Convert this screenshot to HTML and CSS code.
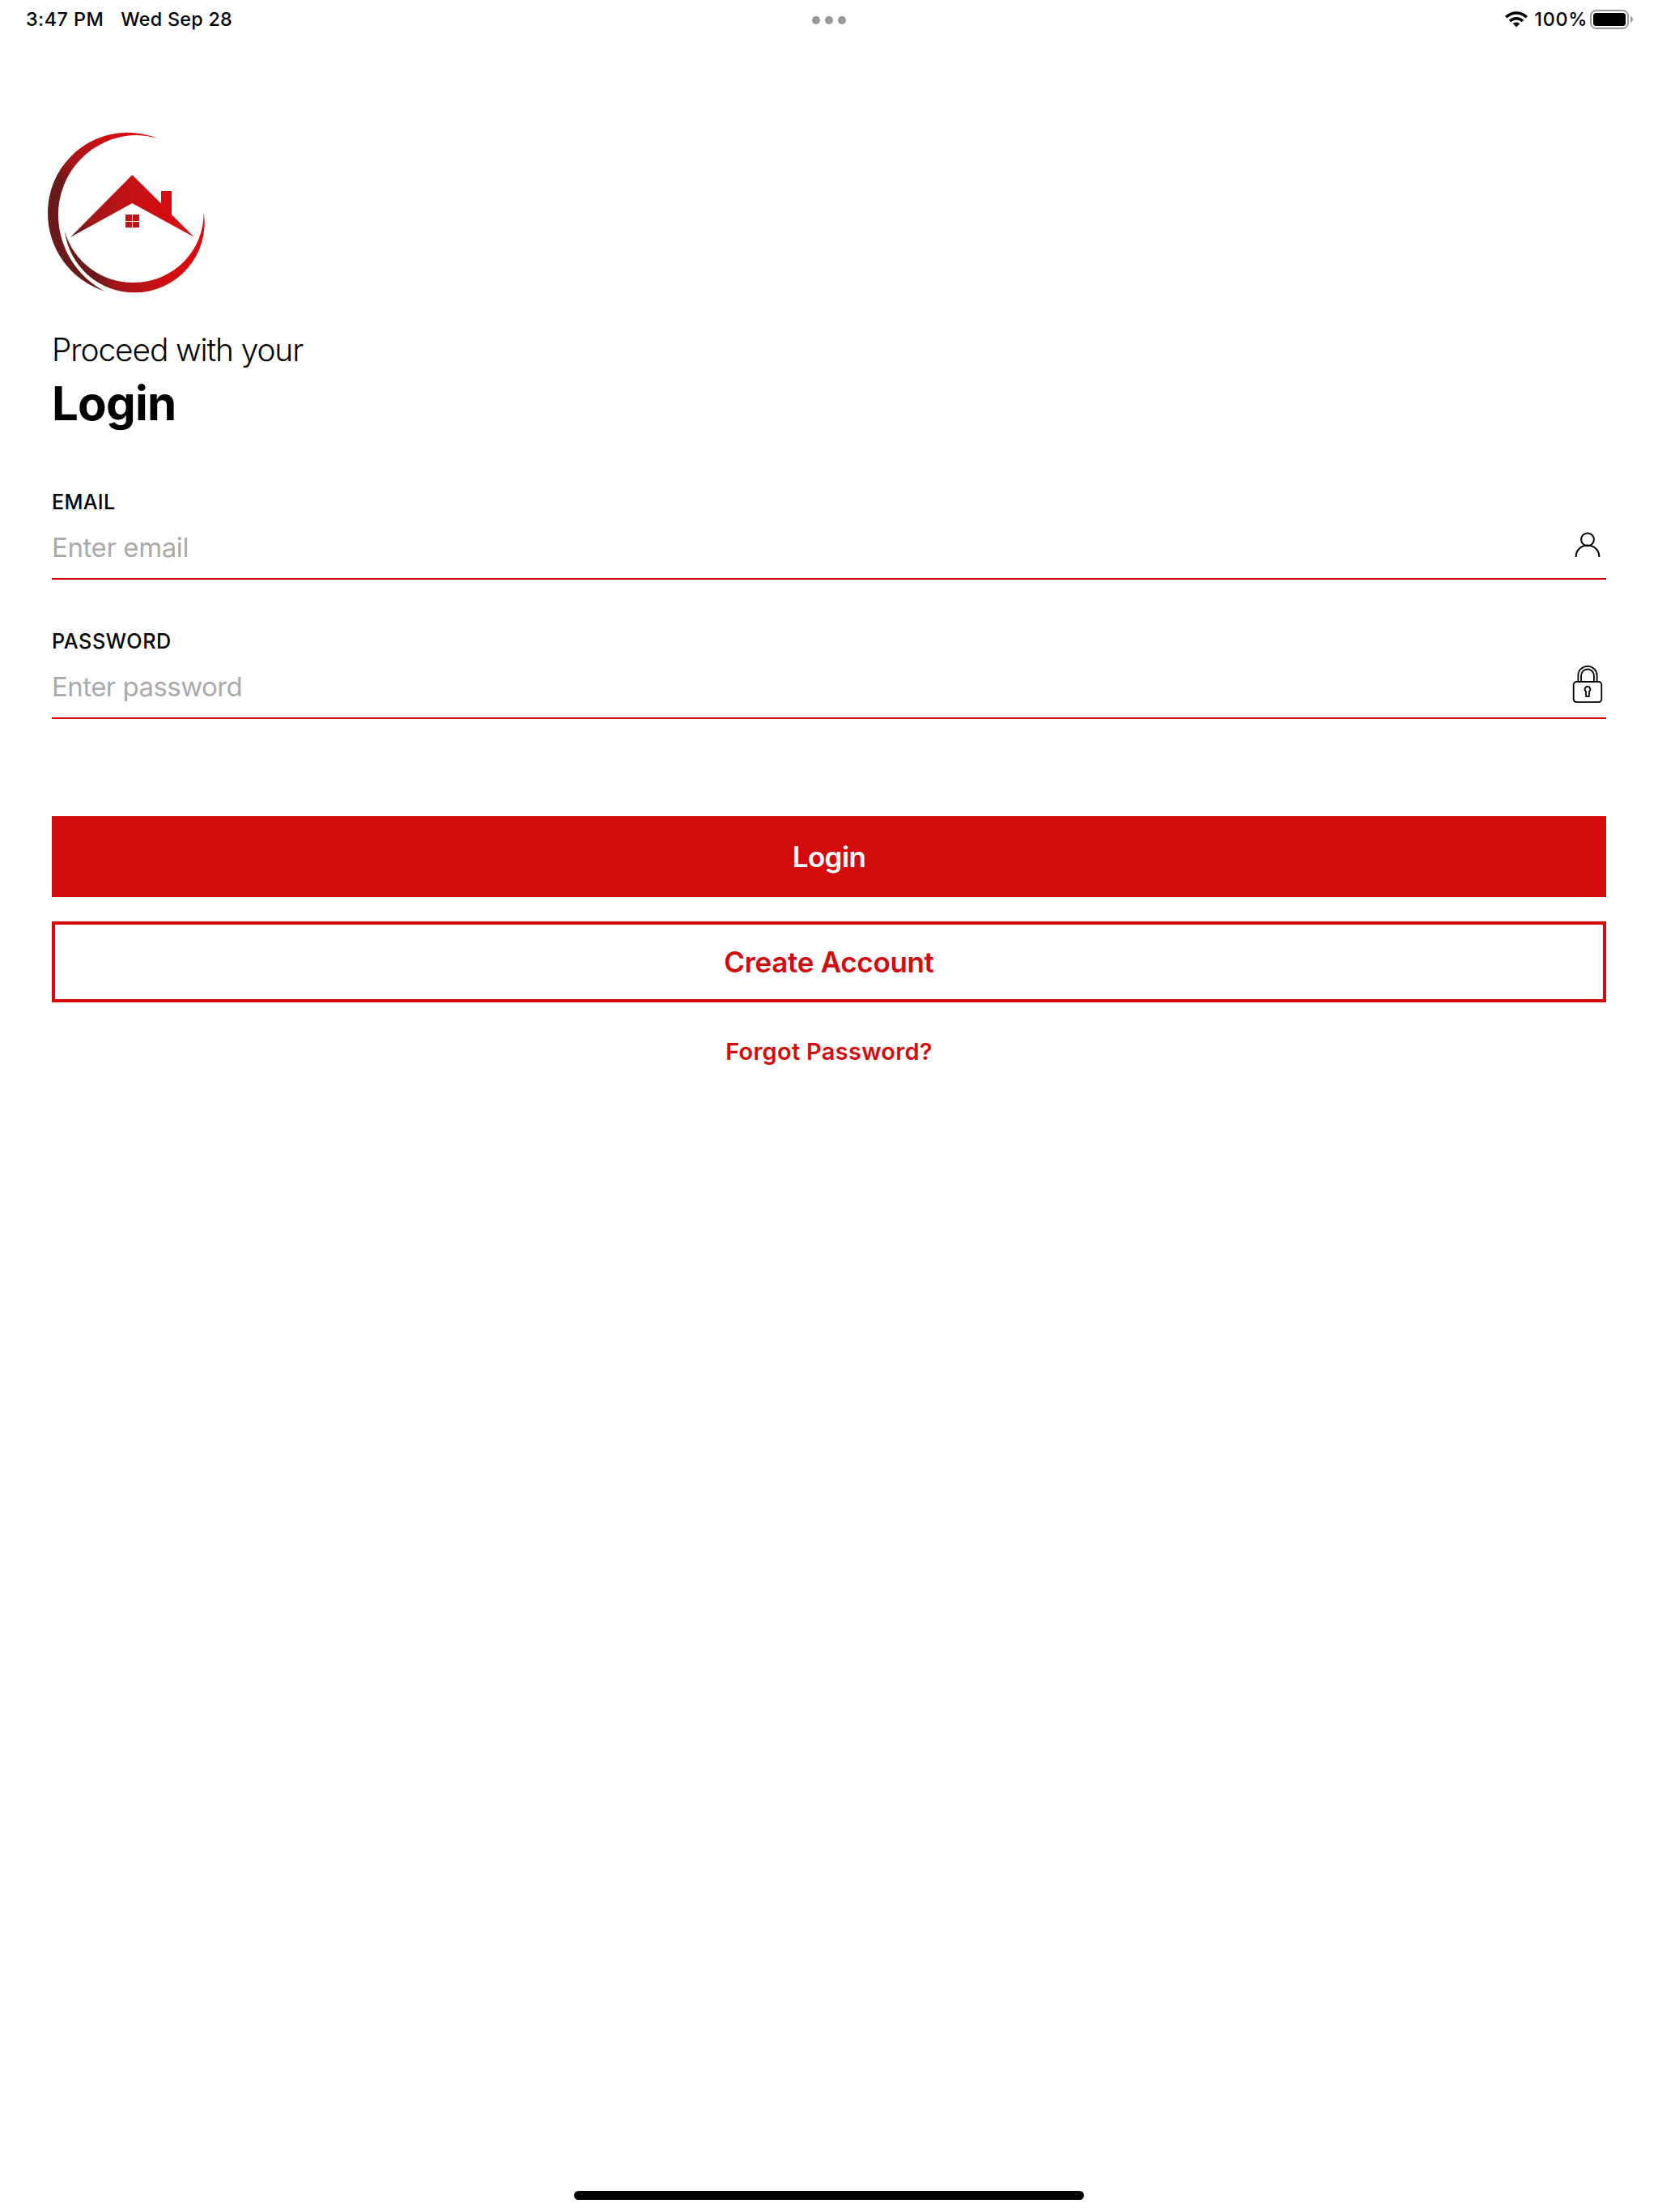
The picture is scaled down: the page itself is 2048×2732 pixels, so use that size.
FILE: index.html
```
<!DOCTYPE html>
<html lang="en">
<head>
<meta charset="utf-8">
<title>Login</title>
<link rel="stylesheet" href="styles.css">
</head>
<body>
<header class="status">
  <div class="status-left"><span class="time">3:47 PM</span><span class="date">Wed Sep 28</span></div>
  <div class="dots"><i></i><i></i><i></i></div>
  <div class="status-right">
    <svg class="wifi" width="28" height="22" viewBox="0 0 28 22" fill="none" stroke="#000" stroke-width="3.6">
      <path d="M1.3 8.2a18 18 0 0 1 25.4 0"/>
      <path d="M6 13a11.4 11.4 0 0 1 16 0"/>
      <path d="M14 20.6l-4.3-4.3a6.2 6.2 0 0 1 8.6 0z" fill="#000" stroke="none"/>
    </svg>
    <span class="percent">100%</span>
    <svg class="battery" width="54" height="24" viewBox="0 0 54 24">
      <rect x="1" y="1" width="46" height="22" rx="6.5" fill="none" stroke="#9b9b9b" stroke-width="2"/>
      <rect x="4" y="4" width="40" height="16" rx="3.5"/>
      <path d="M50 8c4 1.6 4 6.4 0 8z" fill="#9b9b9b"/>
    </svg>
  </div>
</header>
<main class="login">
  <svg class="logo" width="200" height="206" viewBox="54 36 600 618">
    <defs>
      <linearGradient id="ringTop" gradientUnits="userSpaceOnUse" x1="100" y1="215" x2="330" y2="10">
        <stop offset="0" stop-color="#6b1a1c"/><stop offset=".2" stop-color="#a11619"/><stop offset=".65" stop-color="#c81014"/><stop offset="1" stop-color="#d60d11"/>
      </linearGradient>
      <linearGradient id="ringBottom" gradientUnits="userSpaceOnUse" x1="240" y1="590" x2="540" y2="500">
        <stop offset="0" stop-color="#6b1a1c"/><stop offset=".2" stop-color="#a11619"/><stop offset=".65" stop-color="#c81014"/><stop offset="1" stop-color="#d90c10"/>
      </linearGradient>
      <linearGradient id="roof" gradientUnits="userSpaceOnUse" x1="160" y1="415" x2="510" y2="310">
        <stop offset="0" stop-color="#6b1a1c"/><stop offset=".2" stop-color="#a11619"/><stop offset=".65" stop-color="#c41115"/><stop offset="1" stop-color="#d60d11"/>
      </linearGradient>
    </defs>
    <path fill="url(#ringTop)" d="M462 62A297 297 0 0 0 350 41A297 297 0 0 0 57 338A303 303 0 0 0 268 629A320 320 0 0 1 96 350A295 295 0 0 1 385 50A300 300 0 0 1 462 62z"/>
    <path fill="url(#ringBottom)" d="M120 407A259 259 0 0 0 378 634A259 259 0 0 0 635 335A258 258 0 0 1 378 597A262 262 0 0 1 120 407z"/>
    <path fill="url(#roof)" d="M141 429L370 198L477 304V258H516V345L600 429L370 303z"/>
    <path fill="#c41115" d="M345 345h24v24h-24zM372 345h24v24h-24zM345 372h24v21h-24zM372 372h24v21h-24z"/>
  </svg>
  <p class="lead">Proceed with your</p>
  <h1 class="title">Login</h1>
  <form class="form">
    <div class="field field-email">
      <label class="label" for="email">EMAIL</label>
      <div class="row">
        <input class="input" id="email" type="email" placeholder="Enter email">
        <svg width="46" height="76" viewBox="0 0 46 76" fill="none" stroke="#000" stroke-width="2">
          <circle cx="23" cy="28.3" r="7.9"/>
          <path d="M8.7 50v-1.2a14.3 13.2 0 0 1 28.6 0v1.2"/>
        </svg>
      </div>
    </div>
    <div class="field field-password">
      <label class="label" for="password">PASSWORD</label>
      <div class="row">
        <input class="input" id="password" type="password" placeholder="Enter password">
        <svg width="46" height="76" viewBox="0 0 46 76" fill="none" stroke="#000" stroke-width="1.8">
          <rect x="5.7" y="32" width="34.6" height="25.2" rx="3.6"/>
          <path d="M11.4 31.5V24a11.6 11.2 0 0 1 23.2 0v7.5M15.1 31.5v-7a7.9 8 0 0 1 15.8 0v7"/>
          <path d="M21.2 50.2l-.3-6.2a3.4 3.4 0 1 1 4.2 0l-.3 6.2z"/>
        </svg>
      </div>
    </div>
    <button class="button primary" type="button">Login</button>
    <button class="button outline" type="button">Create Account</button>
    <a class="forgot">Forgot Password?</a>
  </form>
</main>
<div class="home"></div>
</body>
</html>
```
FILE: styles.css
```
* { box-sizing: border-box; margin: 0; }
body {
  min-height: 2732px;
  display: flex;
  flex-direction: column;
  background: #fff;
  color: #000;
  font-family: Inter, "Liberation Sans", sans-serif;
}
.status {
  height: 48px;
  padding: 0 30px;
  display: grid;
  grid-template-columns: 1fr auto 1fr;
  align-items: center;
  font-size: 23.3px;
  font-weight: 500;
  line-height: 46px;
}
.status-left { display: flex; gap: 21px; padding: 0 0 1px 2px; letter-spacing: .5px; }
.date { letter-spacing: .3px; }
.dots { display: flex; gap: 6px; padding-top: 2px; }
.dots i { width: 10px; height: 10px; border-radius: 50%; background: #999; }
.status-right { display: flex; justify-content: flex-end; align-items: center; }
.percent { margin: 0 3px 0 8.300px; padding-bottom: 1px; letter-spacing: .7px; }
.login { padding: 114px 64px 0; }
.logo { display: block; margin-left: -6px; }
.lead { margin-top: 40px; font-size: 38.8px; font-weight: 300; line-height: 48px; letter-spacing: -1.07px; }
.title { margin-top: 6px; font-size: 58.2px; font-weight: 700; line-height: 72px; letter-spacing: -.8px; }
.form { margin-top: 70px; display: flex; flex-direction: column; }
.field { border-bottom: 2px solid #d40b0d; margin-bottom: 60px; }
.label { display: block; font-size: 25.2px; font-weight: 500; line-height: 32px; }
.row { display: flex; height: 76px; margin-top: 2px; }
.input {
  flex: 1;
  padding: 0;
  border: 0;
  outline: 0;
  background: none;
  font: 400 33px Inter, "Liberation Sans", sans-serif;
}
.input::placeholder { color: #aaa; opacity: 1; }
.field-email .label { letter-spacing: .25px; }
.field-email .input { letter-spacing: -.4px; }
.field-password .label { letter-spacing: .55px; }
.field-password .input { letter-spacing: -.55px; }
.button { height: 100px; border: 4px solid #d40b0d; padding: 0; font: 600 35px Inter, "Liberation Sans", sans-serif; }
.primary { margin-top: 60px; background: #d40b0d; color: #fff; letter-spacing: -.6px; }
.outline { margin-top: 30px; background: #fff; color: #d40b0d; letter-spacing: -.32px; }
.forgot { align-self: center; margin-top: 43px; color: #d40b0d; font-size: 29px; font-weight: 600; line-height: 36px; letter-spacing: .28px; }
.home { width: 630px; height: 11px; margin: auto auto 15px; border-radius: 6px; background: #000; }
```
